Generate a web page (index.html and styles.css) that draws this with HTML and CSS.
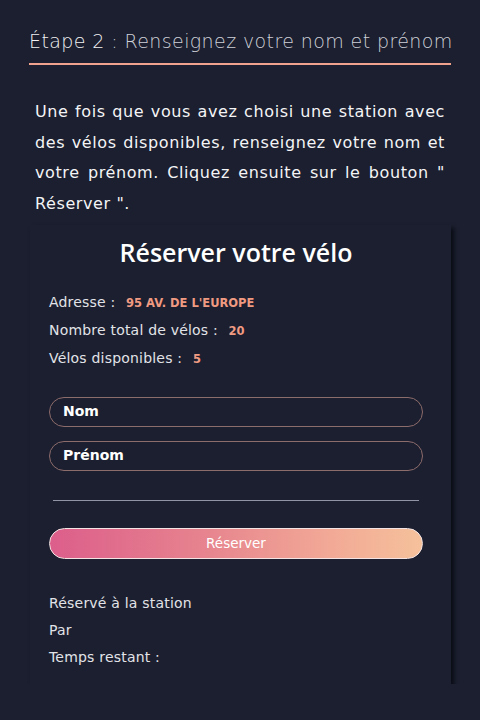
FILE: index.html
```html
<!DOCTYPE html>
<html lang="fr">
<head>
<meta charset="utf-8">
<link rel="stylesheet" href="styles.css">
</head>
<body>
<main class="page">
  <h2 class="step-title"><span class="step-num">Étape 2</span> : Renseignez votre nom et prénom</h2>
  <p class="intro">Une fois que vous avez choisi une station avec des vélos disponibles, renseignez votre nom et votre prénom. Cliquez ensuite sur le bouton " Réserver ".</p>
  <section class="card">
    <h1 class="card-title">Réserver votre vélo</h1>
    <ul class="info">
      <li>Adresse : <span class="val">95 AV. DE L'EUROPE</span></li>
      <li>Nombre total de vélos : <span class="val">20</span></li>
      <li>Vélos disponibles : <span class="val">5</span></li>
    </ul>
    <form class="form">
      <div class="field">Nom</div>
      <div class="field">Prénom</div>
      <div class="sep"></div>
      <div class="btn">Réserver</div>
    </form>
    <ul class="status">
      <li>Réservé à la station</li>
      <li>Par</li>
      <li>Temps restant :</li>
    </ul>
  </section>
</main>
</body>
</html>
```
FILE: styles.css
```css
html, body {
  margin: 0;
  padding: 0;
  background: #1b1f2f;
}
body {
  font-family: "DejaVu Sans", "Noto Sans", sans-serif;
  color: #e8e8ec;
}
.page {
  width: 422px;
  margin-left: 29px;
  padding-top: 28px;
}
.step-title {
  margin: 0;
  font-weight: 300;
  font-size: 19px;
  line-height: 26px;
  color: #cfd0d8;
  padding-bottom: 9px;
  border-bottom: 2px solid #f0a28e;
  white-space: nowrap;
  letter-spacing: 0.4px;
}
.step-num {
  color: #f2f2f4;
}
.intro {
  margin: 32px 0 0;
  padding: 0 6px;
  font-size: 16px;
  line-height: 30.5px;
  text-align: justify;
  color: #f4f4f6;
  letter-spacing: 0.6px;
}
.card {
  margin-top: 6px;
  margin-left: 1px;
  width: 421px;
  box-sizing: border-box;
  padding: 9px 28px 13px 19px;
  box-shadow: 3px 3px 4px rgba(5, 7, 14, 0.8);
}
.card-title {
  margin: 0;
  text-align: center;
  font-family: "Open Sans", sans-serif;
  font-weight: 600;
  font-size: 25px;
  line-height: 36px;
  color: #ffffff;
}
.info, .status {
  list-style: none;
  margin: 0;
  padding: 0;
}
.info {
  margin-top: 19px;
}
.info li, .status li {
  font-size: 14px;
  line-height: 27px;
  color: #e2e3e8;
  letter-spacing: 0.2px;
}
.val {
  margin-left: 6px;
  color: #f09a82;
  font-weight: 600;
  font-size: 11.5px;
  letter-spacing: 0;
}
.form {
  margin-top: 24px;
  display: flex;
  flex-direction: column;
}
.field {
  height: 30px;
  box-sizing: border-box;
  border: 1.5px solid #8d6c6c;
  border-radius: 15px;
  padding-left: 13px;
  font-size: 14px;
  font-weight: bold;
  line-height: 27px;
  color: #ffffff;
}
.field + .field {
  margin-top: 14px;
}
.sep {
  margin: 29px 4px 27px;
  height: 1px;
  background: #9095a3;
}
.btn {
  height: 31px;
  box-sizing: border-box;
  border: 1px solid #f3e3e3;
  border-radius: 16px;
  background: linear-gradient(to right, #dc5e8b, #e6828e 40%, #f2a996 75%, #f5c19b);
  text-align: center;
  font-size: 13.5px;
  line-height: 29px;
  color: #ffffff;
}
.status {
  margin-top: 31px;
}
```
